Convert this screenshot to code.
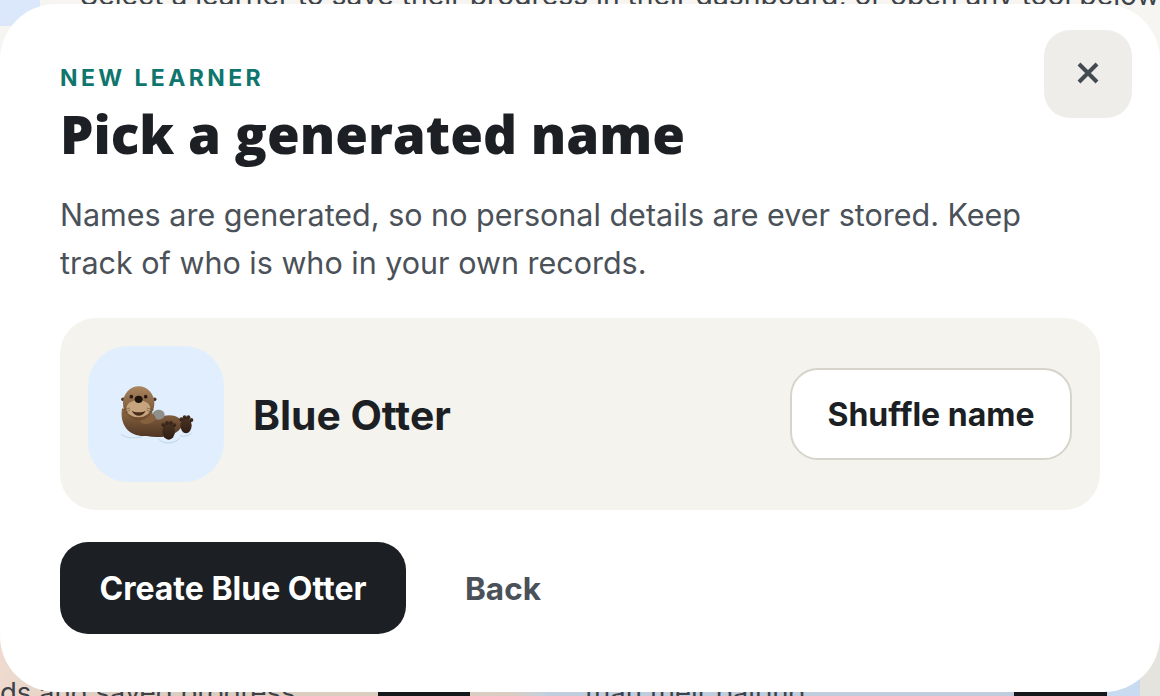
<div class="page">
  <div class="behind">
    <div class="blob"></div>
    <p class="top-text">Select a learner to save their progress in their dashboard, or open any tool below</p>
    <div class="bottom-row">
      <div class="seg tan"><span class="bt">ds and saved progress</span><i class="black"></i></div>
      <div class="seg fill"></div>
      <div class="seg blue"><span class="bt second">than their pairing</span><i class="black two"></i></div>
      <div class="seg end"></div>
    </div>
  </div>
  <div class="modal">
    <button class="close" aria-label="Close">
      <svg width="24" height="24" viewBox="0 0 24 24"><path d="M3 2 L21 20 M21 2 L3 20" stroke="#434a52" stroke-width="4" fill="none"/></svg>
    </button>
    <div class="eyebrow">NEW LEARNER</div>
    <h2>Pick a generated name</h2>
    <p class="desc">Names are generated, so no personal details are ever stored. Keep track of who is who in your own records.</p>
    <div class="panel">
      <div class="avatar">
        <svg role="img" aria-label="Otter" width="136" height="136" viewBox="24 18 408 408">
          <defs>
            <linearGradient id="fur" x1="0" y1="0" x2="0" y2="1"><stop offset="0" stop-color="#a98660"/><stop offset="1" stop-color="#6d4a2d"/></linearGradient>
            <linearGradient id="bod" x1="0" y1="0" x2="0" y2="1"><stop offset="0" stop-color="#8f6a45"/><stop offset="1" stop-color="#4f3523"/></linearGradient>
            <linearGradient id="paw" x1="0" y1="0" x2="0" y2="1"><stop offset="0" stop-color="#4d3424"/><stop offset="1" stop-color="#2e1d13"/></linearGradient>
          </defs>
          <g fill="none" stroke="#bcd5e6" stroke-width="3" stroke-linecap="round">
            <path d="M124 284 C140 296 170 296 186 290"/>
            <path d="M236 298 C250 314 282 312 298 296"/>
            <path d="M300 288 C312 290 326 288 334 280"/>
          </g>
          <path d="M126 205 C118 258 150 292 200 288 C240 296 294 290 308 254 C304 228 276 222 250 228 C225 236 212 238 200 222 Z" fill="url(#bod)"/>
          <ellipse cx="236" cy="224" rx="18" ry="15" fill="#8f8f8c"/>
          <path d="M186 226 C205 208 224 220 228 238 C214 254 194 256 180 246 Z" fill="#86613e"/>
          <circle cx="129" cy="178" r="5.5" fill="#4a3322"/>
          <circle cx="224" cy="178" r="5.5" fill="#4a3322"/>
          <ellipse cx="176" cy="190" rx="47" ry="51" fill="url(#fur)"/>
          <ellipse cx="175" cy="206" rx="36" ry="26" fill="#c6a47d"/>
          <circle cx="154" cy="170" r="5.5" fill="#2c1c12"/>
          <circle cx="197" cy="170" r="5.5" fill="#2c1c12"/>
          <ellipse cx="176" cy="178" rx="12" ry="11" fill="#1e130d"/>
          <path d="M155 212 C165 232 188 232 197 212 C186 218 166 218 155 212 Z" fill="#4a2c1b"/>
          <g stroke="#5f4430" stroke-width="1.6" fill="none">
            <path d="M150 204 L128 210 M150 210 L130 220 M200 204 L222 210 M200 210 L220 220"/>
          </g>
          <g fill="url(#paw)">
            <ellipse cx="318" cy="256" rx="17" ry="24"/>
            <circle cx="304" cy="238" r="6"/><circle cx="314" cy="232" r="6"/><circle cx="325" cy="232" r="6"/><circle cx="334" cy="240" r="6"/>
            <ellipse cx="266" cy="274" rx="19" ry="25"/>
            <circle cx="250" cy="254" r="6"/><circle cx="261" cy="248" r="6"/><circle cx="273" cy="248" r="6"/><circle cx="283" cy="255" r="6"/>
          </g>
        </svg>
      </div>
      <div class="name">Blue Otter</div>
      <button class="shuffle">Shuffle name</button>
    </div>
    <div class="actions">
      <button class="create">Create Blue Otter</button>
      <button class="back">Back</button>
    </div>
  </div>
</div>

<style>
  :global(body) { margin: 0; font-family: Inter, "Liberation Sans", sans-serif; }
  .page { position: relative; width: 1160px; height: 696px; overflow: hidden; background: #f6f5f2; }
  .behind { position: absolute; inset: 0; display: flex; flex-direction: column; justify-content: space-between; }
  .blob { position: absolute; left: 0; top: 0; width: 40px; height: 26px; background: #dbe8fb; }
  .top-text { margin: -23px 0 0 80px; width: 1200px; font-size: 28.3px; line-height: 36px; color: #3d4248; white-space: nowrap; }
  .bottom-row { display: flex; height: 60px; color: #3d4248; font-size: 27.5px; line-height: 36px; }
  .seg { position: relative; height: 60px; display: flex; align-items: flex-end; }
  .tan { width: 470px; background: linear-gradient(90deg, #eedacf, #dccdc1 25%); }
  .fill { width: 75px; background: linear-gradient(90deg, #dccdc1, #d8ccc4 60%, #c4d0df); }
  .blue { width: 595px; background: linear-gradient(90deg, #bfcddd, #bfcddd 80%, #c9dbf0 94%); }
  .end { width: 20px; background: #e5e3de; }
  .bt { white-space: nowrap; margin-bottom: -14px; }
  .second { margin-left: 40px; }
  .black { position: absolute; left: 378px; top: 0; width: 92px; height: 60px; background: #16181b; }
  .black.two { left: 469px; width: 93px; }
  .modal { position: absolute; left: 0; top: 4px; width: 1160px; height: 688px; box-sizing: border-box; background: #fff; border-radius: 56px; padding: 59px 60px 0; }
  .close { position: absolute; top: 26px; right: 28px; width: 88px; height: 88px; display: flex; align-items: center; justify-content: center; padding: 0; border: 0; border-radius: 26px; background: #eeede9; }
  .eyebrow { color: #0f766e; font-size: 23px; font-weight: 700; letter-spacing: 3.4px; line-height: 30px; }
  h2 { margin: 10px 0 0; font-family: "Open Sans", sans-serif; font-size: 53px; font-weight: 800; line-height: 62px; color: #1c1f23; }
  .desc { margin: 26px 0 0; width: 1000px; font-size: 30.5px; line-height: 48px; color: #4b5158; }
  .panel { margin-top: 31px; width: 1040px; height: 192px; box-sizing: border-box; padding: 0 28px; display: flex; align-items: center; border-radius: 36px; background: #f4f3ee; }
  .avatar { width: 136px; height: 136px; border-radius: 40px; background: #e1eefe; }
  .avatar svg { display: block; }
  .name { margin-left: 29px; margin-top: 2px; font-size: 40.8px; font-weight: 700; color: #1c1f23; }
  .shuffle { margin-left: auto; width: 282px; height: 92px; box-sizing: border-box; border: 2px solid #d6d4cb; border-radius: 28px; background: #fff; font: 700 32px Inter, sans-serif; color: #1c1f23; }
  .actions { margin-top: 32px; display: flex; align-items: center; }
  .create { width: 346px; height: 92px; border: 0; border-radius: 28px; background: #1c1f23; color: #fff; font: 700 32px Inter, sans-serif; }
  .back { margin-left: 59px; padding: 0; border: 0; background: none; color: #4b5158; font: 700 31.5px Inter, sans-serif; }
</style>
